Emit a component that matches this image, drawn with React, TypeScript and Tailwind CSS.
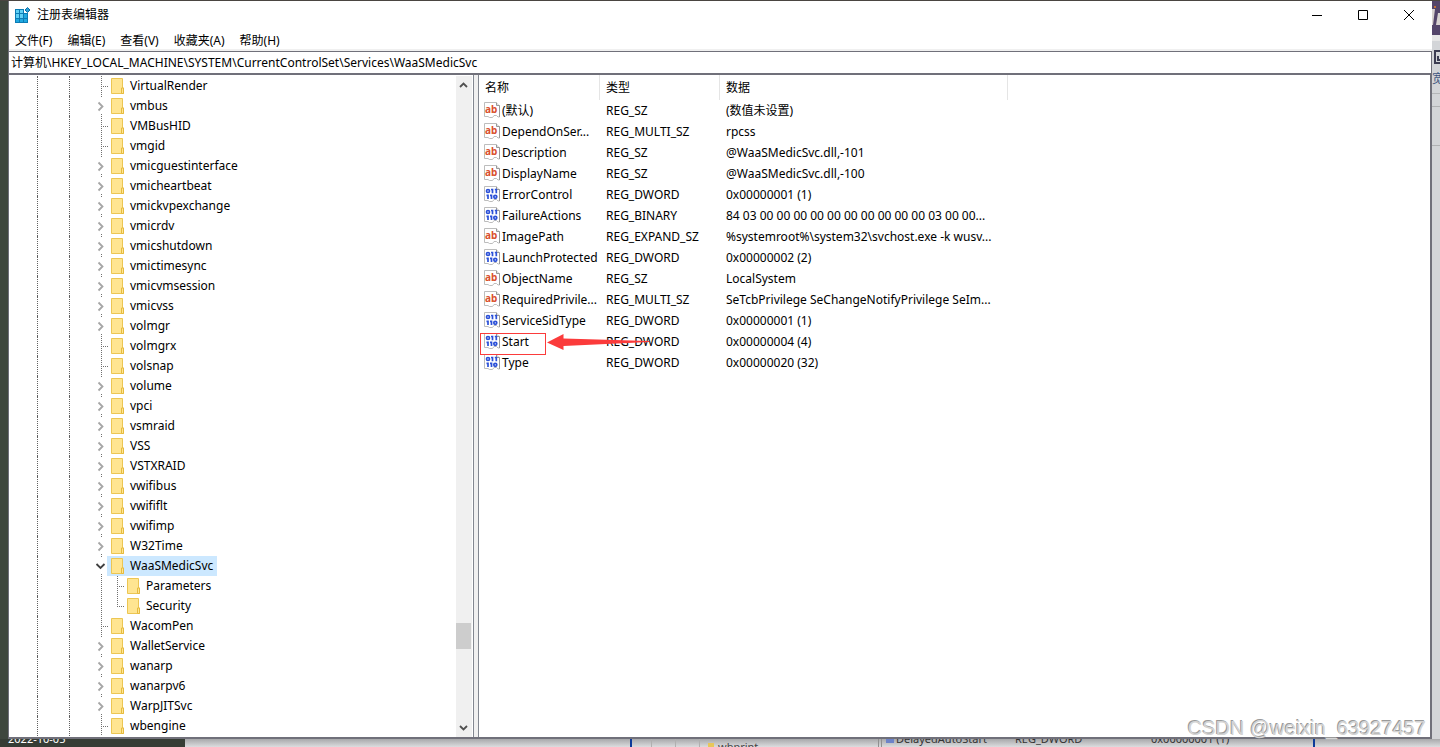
import { clsx } from "clsx";

type TreeItem = {
  name: string;
  kind?: "leaf" | "closed" | "open";
  child?: "mid" | "last";
};

const TREE: TreeItem[] = [
  { name: "VirtualRender", kind: "leaf" },
  { name: "vmbus" },
  { name: "VMBusHID", kind: "leaf" },
  { name: "vmgid", kind: "leaf" },
  { name: "vmicguestinterface" },
  { name: "vmicheartbeat" },
  { name: "vmickvpexchange" },
  { name: "vmicrdv" },
  { name: "vmicshutdown" },
  { name: "vmictimesync" },
  { name: "vmicvmsession" },
  { name: "vmicvss" },
  { name: "volmgr" },
  { name: "volmgrx", kind: "leaf" },
  { name: "volsnap", kind: "leaf" },
  { name: "volume" },
  { name: "vpci" },
  { name: "vsmraid" },
  { name: "VSS" },
  { name: "VSTXRAID" },
  { name: "vwifibus" },
  { name: "vwififlt" },
  { name: "vwifimp" },
  { name: "W32Time" },
  { name: "WaaSMedicSvc", kind: "open" },
  { name: "Parameters", child: "mid" },
  { name: "Security", child: "last" },
  { name: "WacomPen", kind: "leaf" },
  { name: "WalletService" },
  { name: "wanarp" },
  { name: "wanarpv6" },
  { name: "WarpJITSvc" },
  { name: "wbengine", kind: "leaf" },
];

const VALUES = [
  { name: "(默认)", type: "REG_SZ", data: "(数值未设置)" },
  { name: "DependOnSer...", type: "REG_MULTI_SZ", data: "rpcss" },
  { name: "Description", type: "REG_SZ", data: "@WaaSMedicSvc.dll,-101" },
  { name: "DisplayName", type: "REG_SZ", data: "@WaaSMedicSvc.dll,-100" },
  { name: "ErrorControl", type: "REG_DWORD", data: "0x00000001 (1)" },
  { name: "FailureActions", type: "REG_BINARY", data: "84 03 00 00 00 00 00 00 00 00 00 00 03 00 00..." },
  { name: "ImagePath", type: "REG_EXPAND_SZ", data: "%systemroot%\\system32\\svchost.exe -k wusv..." },
  { name: "LaunchProtected", type: "REG_DWORD", data: "0x00000002 (2)" },
  { name: "ObjectName", type: "REG_SZ", data: "LocalSystem" },
  { name: "RequiredPrivile...", type: "REG_MULTI_SZ", data: "SeTcbPrivilege SeChangeNotifyPrivilege SeIm..." },
  { name: "ServiceSidType", type: "REG_DWORD", data: "0x00000001 (1)" },
  { name: "Start", type: "REG_DWORD", data: "0x00000004 (4)" },
  { name: "Type", type: "REG_DWORD", data: "0x00000020 (32)" },
];

const MENUS = ["文件(F)", "编辑(E)", "查看(V)", "收藏夹(A)", "帮助(H)"];

function AppIcon() {
  return (
    <svg width="16" height="16" viewBox="0 0 16 16" aria-hidden="true">
      <path d="M0 2h9v4h4v10H0z" fill="#0c7cb5" />
      <path d="M1 3h3v3H1zM5 3h3v3H5zM1 7h3v4H1zM5 7h3v4H5z" fill="#5fd0f5" />
      <path d="M9 7h3v4H9zM1 12h3v3H1zM5 12h3v3H5zM9 12h3v3H9z" fill="#1fa8e0" />
      <path d="M12.500 .500L15 3l-2.500 2.500L10 3z" fill="#2a9fd6" stroke="#0c6fa5" />
    </svg>
  );
}

function FolderIcon() {
  return (
    <svg className="shrink-0" width="13" height="16" viewBox="0 0 13 16" aria-hidden="true">
      <path d="M.5.500h11v9.500h1v5.500H.5z" fill="#ffe591" stroke="#ecc653" />
      <path d="M10.500 15.500V10h2v5.500z" fill="#ffe591" stroke="#e6bb3f" />
    </svg>
  );
}

function ValueIcon({ text }: { text: boolean }) {
  return (
    <svg className="mb-0.5 shrink-0" width="16" height="16" viewBox="0 0 16 16" aria-hidden="true">
      <path d="M.5.500H12l3.500 3.500v11H14l-1.500-1.500H10L8.500 15.500H5.500L4 14.500H.5z" fill="#fff" stroke="#bdbdbd" />
      <path d="M12.500 .500V3.500h3V15" fill="none" stroke="#999" />
      {text ? (
        <text x="1" y="11" fill="#d9502e" className="font-['Noto_Sans',sans-serif] text-[10px] font-bold">ab</text>
      ) : (
        <g fill="none" stroke="#2b50d8" strokeWidth="1.700">
          <ellipse cx="4" cy="5" rx="1.500" ry="1.500" />
          <path d="M8.500 2.700v4.500M12.300 2.700v4.500M7 3.500h1.500M10.800 3.500h1.500" />
          <path d="M4 8.500V13M7.500 8.500V13M2.500 9.300H4M6 9.300h1.500" />
          <ellipse cx="11.300" cy="10.800" rx="1.500" ry="1.500" />
        </g>
      )}
    </svg>
  );
}

// Dotted guide plus the expander that sits on it; one cell per tree level.
function Branch({ kind }: { kind: "leaf" | "closed" | "open" | "pass" | "last" }) {
  return (
    <svg className="shrink-0 overflow-visible" width="14" height="20" viewBox="0 0 14 20" aria-hidden="true">
      <g fill="none" stroke="#707070" strokeDasharray="1 1">
        {(kind === "leaf" || kind === "pass") && <path d="M8.500 0v20" />}
        {kind === "last" && <path d="M8.500 0v11" />}
        {(kind === "leaf" || kind === "last") && <path d="M10 10.500h5" />}
        {(kind === "closed" || kind === "open") && <path d="M8.500 0v2M8.500 18v2" />}
      </g>
      {kind === "closed" && <path d="M5.500 6.500l4 4-4 4" fill="none" stroke="#a6a6a6" strokeWidth="1.800" />}
      {kind === "open" && <path d="M3.500 8l4 4 4-4" fill="none" stroke="#404040" strokeWidth="1.800" />}
    </svg>
  );
}

function TreeRow({ item }: { item: TreeItem }) {
  const open = item.kind === "open";
  return (
    <li className="flex h-5">
      <span className="w-7 shrink-0" />
      <span className="w-8 shrink-0 border-l border-dotted border-[#606060]" />
      <span className="w-6 shrink-0 border-l border-dotted border-[#606060]" />
      <Branch kind={item.child ? "pass" : item.kind ?? "closed"} />
      {item.child && (
        <span className="flex shrink-0 pl-0.5">
          <Branch kind={item.child === "last" ? "last" : "leaf"} />
        </span>
      )}
      <button className={clsx("flex items-center gap-1.5 whitespace-nowrap pl-1 pr-1", open && "bg-[#cce8ff]")}>
        <FolderIcon />
        {item.name}
      </button>
    </li>
  );
}

function ScrollBar() {
  return (
    <div className="mt-px flex w-4 shrink-0 flex-col bg-[#f0f0f0]">
      <button aria-label="Scroll up" className="flex h-[18px] w-[15px] items-center justify-center">
        <svg width="9" height="6" viewBox="0 0 9 6"><path d="M1 5l3.500-3.500L8 5" fill="none" stroke="#505050" strokeWidth="1.800" /></svg>
      </button>
      <div className="grow-[529]" />
      <div className="h-[26px] w-[15px] bg-[#cdcdcd]" />
      <div className="grow-[70]" />
      <button aria-label="Scroll down" className="flex h-[18px] w-[15px] items-center justify-center">
        <svg width="9" height="6" viewBox="0 0 9 6"><path d="M1 1l3.500 3.500L8 1" fill="none" stroke="#505050" strokeWidth="1.800" /></svg>
      </button>
    </div>
  );
}

function StartMarker() {
  return (
    <>
      <span className="absolute left-px top-0.5 z-10 h-[22px] w-[66px] border border-[#fb3b3b]" />
      <svg className="absolute left-[68px] top-0.5 z-10" width="104" height="18" viewBox="0 0 104 18" aria-hidden="true">
        <path d="M0 9.500L16.500 1v4.500L102 8v1L16.500 13v4z" fill="#fb3b3b" />
      </svg>
    </>
  );
}

function ValueTable() {
  return (
    <table className="w-full table-fixed border-separate border-spacing-0 text-left">
      <colgroup>
        <col className="w-[121px]" />
        <col className="w-[120px]" />
        <col className="w-[288px]" />
        <col />
      </colgroup>
      <thead>
        <tr className="h-[25px]">
          {["名称", "类型", "数据"].map((h) => (
            <th key={h} className="border-r border-[#e5e5e5] p-0 pl-1.5 font-normal">{h}</th>
          ))}
          <td className="p-0" />
        </tr>
      </thead>
      <tbody>
        {VALUES.map((v) => (
          <tr key={v.name} className="h-[21px]">
            <td className="relative p-0 pl-[5px]">
              <span className="flex h-4 items-center gap-0.5 whitespace-nowrap">
                <ValueIcon text={v.type.endsWith("SZ")} />
                {v.name}
              </span>
              {v.name === "Start" && <StartMarker />}
            </td>
            <td className="whitespace-nowrap p-0 pl-1.5">{v.type}</td>
            <td className="whitespace-nowrap p-0 pl-1.5">{v.data}</td>
            <td className="p-0" />
          </tr>
        ))}
      </tbody>
    </table>
  );
}

// Slivers of the desktop and of the window behind, visible around the editor.
function RightSliver() {
  return (
    <div className="flex w-2 shrink-0 flex-col overflow-hidden bg-[#d3d5d8]">
      <div className="h-[34px] shrink-0 bg-[#54456a]">
        <svg width="8" height="34" viewBox="0 0 8 34" aria-hidden="true">
          <path d="M0 8h3L1 24H0zM6 12h2v12H4z" fill="#d8d2d0" />
          <path d="M2 5h2v2H2z" fill="#c07038" />
        </svg>
      </div>
      <div className="h-1.5 shrink-0 bg-[#e6e6e6]" />
      <svg className="mt-1.5 shrink-0" width="8" height="18" viewBox="0 0 8 18" aria-hidden="true">
        <path d="M8 4H3v12h5M8 13H6V9" fill="none" stroke="#3c3d52" strokeWidth="2" />
      </svg>
      <span className="mt-1.5 h-4 shrink-0 overflow-hidden text-[#3f5680]">宽</span>
      <div className="mt-1.5 h-px shrink-0 bg-[#b4b6b8]" />
      <div className="mt-3 h-px shrink-0 bg-[#b0b2b4]" />
      <div className="mt-[38px] h-px shrink-0 bg-[#b0b2b4]" />
    </div>
  );
}

function BottomSliver() {
  return (
    <div className="flex h-2 shrink-0 overflow-hidden bg-linear-to-b from-[#a8a9ab] to-[#dcdddf] text-[11px] leading-3">
      <div className="w-[185px] shrink-0 bg-[#363d35] pl-2 text-white">
        <span className="-mt-1.5 block">2022-10-05</span>
      </div>
      <div className="w-[445px] shrink-0" />
      <div className="flex w-[685px] shrink-0 border-x-2 border-[#0d3a99]">
        <div className="w-5 border-r border-[#b0b0b0]" />
        <div className="w-6 border-r border-[#b0b0b0]" />
        <div className="w-6 border-r border-[#b0b0b0]" />
        <div className="ml-2 mt-1 h-1 w-1.5 bg-[#e8c75a]" />
        <span className="ml-1 mt-0.5 w-[160px] text-[#444]">wbprint</span>
        <div className="mr-1 w-1 border-x border-[#909090]" />
        <div className="h-1 w-2 bg-[#6d83c8]" />
        <span className="-mt-1.5 ml-0.5 w-[119px] text-[#333]">DelayedAutoStart</span>
        <span className="-mt-1.5 w-[136px] text-[#333]">REG_DWORD</span>
        <span className="-mt-1.5 text-[#333]">0x00000001 (1)</span>
      </div>
    </div>
  );
}

export default function App() {
  return (
    <div className="relative flex h-screen flex-col overflow-hidden bg-[#3e473d] font-['Noto_Sans','Noto_Sans_CJK_SC',sans-serif] text-[12px] leading-4 text-black">
      <div className="h-px shrink-0 bg-[#4a4541]" />
      <div className="flex min-h-0 flex-1">
        <div className="w-2 shrink-0" />
        <main className="flex min-w-0 flex-1 flex-col border-l border-[#70707a] bg-white">
          <header className="flex h-7 shrink-0 items-center pl-1.5">
            <AppIcon />
            <h1 className="grow pl-1.5">注册表编辑器</h1>
            <button aria-label="Minimize" className="flex h-full w-[46px] items-center justify-center">
              <svg width="10" height="10"><path d="M0 5.500h10" stroke="#000" /></svg>
            </button>
            <button aria-label="Maximize" className="flex h-full w-[46px] items-center justify-center">
              <svg width="10" height="10"><path d="M.5.500h9v9h-9z" fill="none" stroke="#000" /></svg>
            </button>
            <button aria-label="Close" className="flex h-full w-[46px] items-center justify-center">
              <svg width="10" height="10"><path d="M0 0l10 10M10 0L0 10" stroke="#000" /></svg>
            </button>
          </header>
          <nav className="flex h-[22px] shrink-0 items-center gap-[15px] border-b-2 border-[#f0f0f0] pl-1.5 pt-1">
            {MENUS.map((m) => (
              <button key={m} className="whitespace-nowrap">{m}</button>
            ))}
          </nav>
          <input
            aria-label="地址"
            className="h-6 shrink-0 border-b-2 border-r border-t border-[#70707a] bg-white pb-0.5 pl-0.5 outline-none"
            defaultValue="计算机\HKEY_LOCAL_MACHINE\SYSTEM\CurrentControlSet\Services\WaaSMedicSvc"
          />
          <div className="flex min-h-0 flex-1 border-b-2 border-r-2 border-[#70707a] bg-[#f0f0f0]">
            <aside className="flex w-[465px] shrink-0 border-r border-[#828790] bg-white">
              <ul className="grow overflow-hidden pt-px">
                {TREE.map((item) => (
                  <TreeRow key={item.name} item={item} />
                ))}
              </ul>
              <ScrollBar />
              <span className="w-px" />
            </aside>
            <section className="ml-1 min-w-0 grow border-l border-[#828790] bg-white">
              <ValueTable />
            </section>
          </div>
        </main>
        <RightSliver />
      </div>
      <BottomSliver />
      <div className="absolute bottom-[7px] right-3.5 font-['Liberation_Sans',sans-serif] text-[20px] leading-6 text-[#d4d4d4] [text-shadow:-1px_-1px_0_#9a9a9a]">
        CSDN @weixin_63927457
      </div>
    </div>
  );
}
